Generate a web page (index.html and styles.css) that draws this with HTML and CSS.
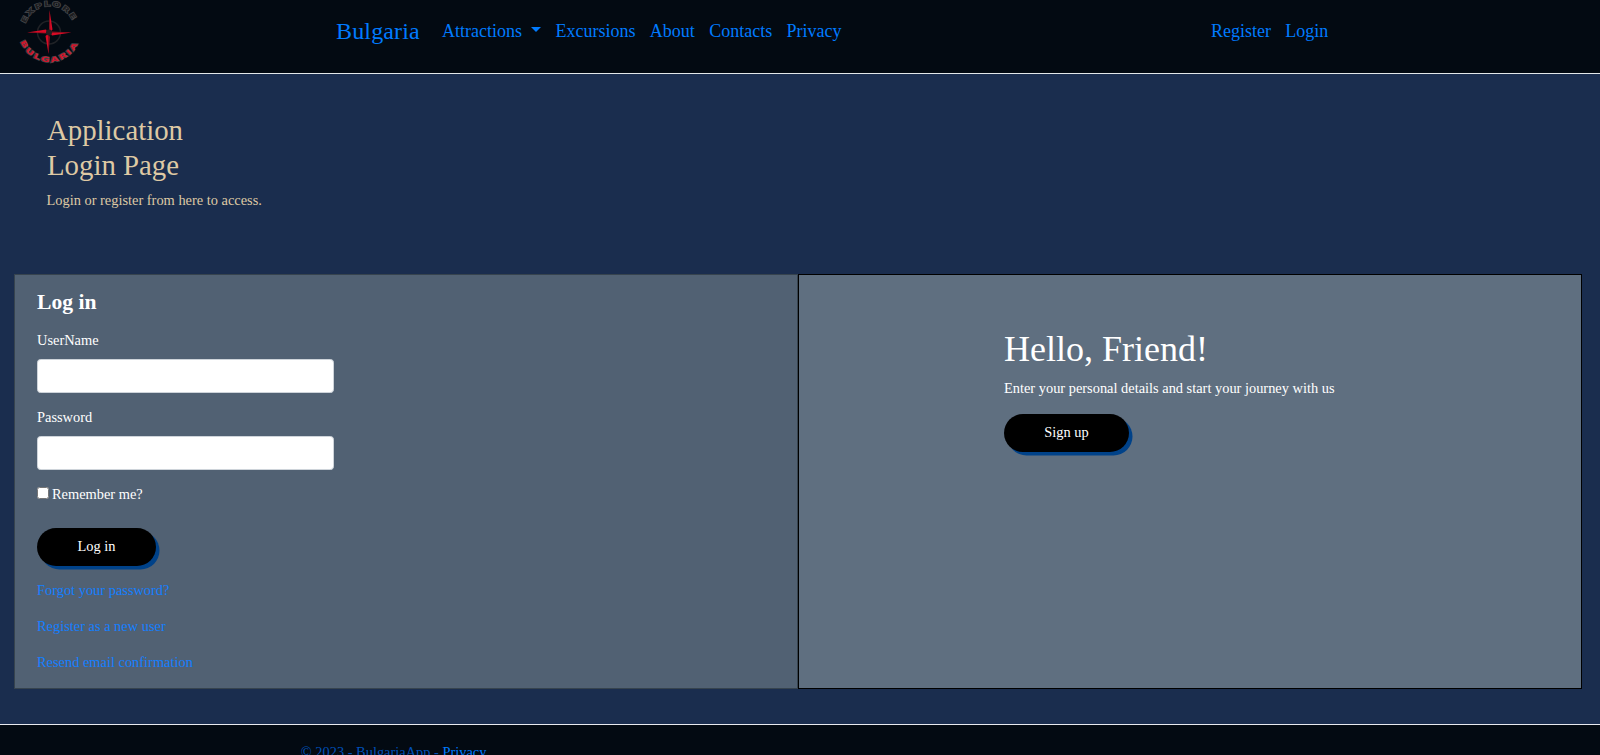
FILE: index.html
```html
<!DOCTYPE html>
<html lang="en">
<head>
<meta charset="utf-8">
<title>Log in - BulgariaApp</title>
<link rel="stylesheet" href="styles.css">
</head>
<body>
<header class="header">
  <svg class="logo" viewBox="0 0 70 70" aria-label="Explore Bulgaria">
    <defs>
      <path id="arc-top" d="M10.500 23.500 A25.300 25.300 0 0 1 58.500 23.500"/>
      <path id="arc-bottom" d="M5.500 42 A31 31 0 0 0 63.500 42"/>
    </defs>
    <circle class="ring" cx="34" cy="32.500" r="11.500"/>
    <path class="needle" d="M34.500 10 L37.500 29.500 L34.500 33Z M56.500 32.500 L37 35.500 L34.500 32Z M33.500 54 L30.500 36 L34 33Z M12 32.500 L31 29.500 L33 33Z"/>
    <path class="needle-shade" d="M34.500 10 L34 29 L35.500 33Z M56 32.500 L37 31.500 L34 33Z M33.500 54 L35 37 L33 33Z M12 32.500 L30 33.500 L34 33Z"/>
    <circle class="hub" cx="34" cy="32.500" r="3"/>
    <text class="logo-top"><textPath href="#arc-top" textLength="61" lengthAdjust="spacingAndGlyphs">EXPLORE</textPath></text>
    <text class="logo-bottom"><textPath href="#arc-bottom" textLength="74" lengthAdjust="spacingAndGlyphs">BULGARIA</textPath></text>
  </svg>
  <nav class="nav">
    <a class="brand">Bulgaria</a>
    <a class="link">Attractions <i class="caret"></i></a>
    <a class="link">Excursions</a>
    <a class="link">About</a>
    <a class="link">Contacts</a>
    <a class="link">Privacy</a>
  </nav>
  <nav class="account">
    <a class="link">Register</a>
    <a class="link">Login</a>
  </nav>
</header>
<main class="main">
  <section class="intro">
    <h2 class="intro-title">Application<br>Login Page</h2>
    <p class="text">Login or register from here to access.</p>
  </section>
  <div class="panels">
    <section class="panel login">
      <h3 class="login-title">Log in</h3>
      <form>
        <div class="group">
          <label class="label" for="user">UserName</label>
          <input class="field" id="user" type="text">
        </div>
        <div class="group">
          <label class="label" for="pass">Password</label>
          <input class="field" id="pass" type="password">
        </div>
        <label class="remember"><input class="check" type="checkbox">Remember me?</label>
        <button class="button login-button" type="button">Log in</button>
      </form>
      <p class="help"><a>Forgot your password?</a></p>
      <p class="help"><a>Register as a new user</a></p>
      <p class="help"><a>Resend email confirmation</a></p>
    </section>
    <section class="panel signup">
      <div>
        <h1 class="hello">Hello, Friend!</h1>
        <p class="text">Enter your personal details and start your journey with us</p>
        <button class="button signup-button" type="button">Sign up</button>
      </div>
    </section>
  </div>
</main>
<footer class="footer">© 2023 - BulgariaApp - <a class="footer-link">Privacy</a></footer>
</body>
</html>
```
FILE: styles.css
```css
* { box-sizing: border-box; }
html { font-size: 14.4px; }
body {
  margin: 0;
  height: 755px;
  overflow: hidden;
  display: flex;
  flex-direction: column;
  background: #1a2d4e;
  color: #fff;
  font-family: "Liberation Serif", "Times New Roman", serif;
  line-height: 1.5;
}
h1, h2, h3, p { margin: 0; }

.header {
  height: 74px;
  flex: none;
  display: flex;
  align-items: flex-start;
  background: #030a12;
  border-bottom: 1px solid #e3e8ea;
  color: #007bff;
}
.logo { width: 70px; height: 70px; margin-left: 15px; flex: none; }
.ring { fill: none; stroke: #202226; stroke-width: 1.5; }
.needle { fill: #d90a25; }
.needle-shade { fill: #85101e; }
.hub { fill: #251c20; }
.logo-top, .logo-bottom {
  font: bold 7px "DejaVu Sans", sans-serif;
  letter-spacing: 1.2px;
  stroke-width: 1.3;
  paint-order: stroke;
}
.logo-top { fill: #1c1d20; stroke: #45464a; }
.logo-bottom { fill: #d0142b; stroke: #46464a; }
.nav {
  display: flex;
  align-items: flex-start;
  margin-left: 251px;
  padding-top: 14px;
}
.brand { font-size: 24px; line-height: 35px; letter-spacing: .15px; margin-right: 15px; }
.nav .link { padding-top: 4px; }
.link { font-size: 18px; line-height: 27px; padding: 0 7.2px; white-space: nowrap; }
.caret {
  display: inline-block;
  margin-left: 4.600px;
  vertical-align: 4.600px;
  border: 5.400px solid transparent;
  border-top-color: #007bff;
  border-bottom: 0;
}
.account { display: flex; margin-left: auto; margin-right: 264.500px; padding-top: 18px; }

.main { height: 650px; flex: none; padding: 0 18px 0 14px; }
.intro { height: 200px; padding: 39.200px 0 0 33px; color: #dec9a4; }
.intro-title { font-size: 2rem; font-weight: 400; line-height: 1.2; margin-bottom: 7.6px; }
.text { white-space: nowrap; }
.intro .text { margin-left: -.5px; }

.panels { display: grid; grid-template-columns: 1fr 1fr; grid-template-rows: 415px; }
.panel { border: 1px solid #000; }
.login { background: #516173; border-color: #36434e; padding: 15px 22px 0; }
.login-title { font-size: 21.6px; line-height: 1.2; margin-bottom: 14.1px; }
.group { display: flex; flex-direction: column; margin-bottom: 14px; }
.label { margin-bottom: 7.2px; }
.field {
  width: 297px;
  height: 34px;
  border: 1px solid #ced4da;
  border-radius: 3.6px;
  background: #fff;
}
.remember { display: flex; align-items: flex-start; margin: 14.900px 0 21.500px; }
.check { width: 12px; height: 12px; margin: 3px 3px 0 0; }
.button {
  display: block;
  height: 38px;
  padding: 0 0 1px;
  border: 0;
  border-radius: 19px;
  background: #000;
  color: #fff;
  box-shadow: 3.500px 3.500px 0 #004289;
  font: inherit;
}
.login-button { width: 119px; padding-bottom: 0; }
.signup-button { width: 125px; }
.help { color: #147fff; margin-bottom: 14.4px; }
form + .help { margin-top: 14px; }
.signup { background: #5f6f80; padding: 53px 0 0 205px; }
.hello { font-size: 36px; font-weight: 400; line-height: 1.2; margin-bottom: 7.2px; }
.signup .text { margin-bottom: 14.4px; }

.footer {
  flex: 1;
  padding: 17px 0 0 300.800px;
  background: #030a12;
  border-top: 1px solid #e8e9ef;
  color: #0050b8;
  white-space: nowrap;
}
.footer-link { color: #007bff; }
```
